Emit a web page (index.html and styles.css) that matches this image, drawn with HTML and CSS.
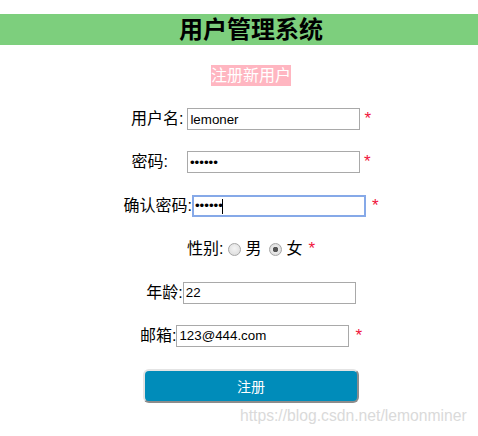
FILE: index.html
```html
<!DOCTYPE html>
<html lang="zh-CN">
<head>
    <meta charset="UTF-8">
    <meta name="viewport" content="width=device-width, initial-scale=1.0">
    <title>用户管理系统</title>
    <link rel="stylesheet" href="styles.css">
</head>
<body>
    <div class="page">
        <h1 class="title">用户管理系统</h1>
        <div class="subtitle"><span class="tag">注册新用户</span></div>
        <form class="reg-form" id="reg-form">
            <div class="row">
                <label class="label" for="username">用户名:</label>
                <input class="field" type="text" id="username" value="lemoner">
                <span class="req">*</span>
            </div>
            <div class="row">
                <label class="label label-wide" for="password">密码:</label>
                <input class="field" type="password" id="password" value="123456">
                <span class="req">*</span>
            </div>
            <div class="row">
                <label class="label label-tight" for="confirm">确认密码:</label>
                <input class="field field-focus" type="password" id="confirm" value="123456">
                <span class="req req-far">*</span>
            </div>
            <div class="row">
                <span class="label label-sex">性别:</span>
                <input class="radio" type="radio" name="sex" id="male">
                <label class="radio-text" for="male">男</label>
                <input class="radio radio-second" type="radio" name="sex" id="female" checked>
                <label class="radio-text" for="female">女</label>
                <span class="req req-far">*</span>
            </div>
            <div class="row">
                <label class="label label-tight" for="age">年龄:</label>
                <input class="field" type="text" id="age" value="22">
            </div>
            <div class="row">
                <label class="label label-tight" for="email">邮箱:</label>
                <input class="field" type="text" id="email" value="123@444.com">
                <span class="req req-far">*</span>
            </div>
            <div class="row row-btn">
                <button class="submit-btn" type="submit">注册</button>
            </div>
        </form>
        <div class="watermark">https://blog.csdn.net/lemonminer</div>
    </div>
</body>
</html>
```

FILE: styles.css
```css
html, body {
    margin: 0;
    overflow: hidden;
}
body {
    font-family: "Liberation Sans", "Noto Sans CJK SC", sans-serif;
    background-color: white;
    color: #000;
}
.page {
    position: relative;
    box-sizing: border-box;
    width: 100%;
    height: 436px;
    padding-top: 14px;
}
.title {
    margin: 0;
    height: 31px;
    padding-left: 24px;
    line-height: 31px;
    background-color: #7dcf7d;
    text-align: center;
    font-size: 24px;
    font-weight: bold;
}
.subtitle {
    margin-top: 20px;
    padding-left: 24px;
    text-align: center;
    height: 21px;
}
.tag {
    display: inline-block;
    height: 21px;
    line-height: 21px;
    background-color: #ffb6c1;
    color: white;
    font-size: 16px;
}
.reg-form {
    margin-top: 22px;
    padding-left: 24px;
    display: flex;
    flex-direction: column;
    gap: 21.4px;
}
.row {
    display: flex;
    justify-content: center;
    align-items: center;
    height: 22px;
    font-size: 16px;
}
.label {
    line-height: 22px;
    margin-right: 4px;
}
.label-wide {
    margin-right: 19px;
}
.label-tight {
    margin-right: 0;
}
.label-sex {
    margin-right: 3px;
}
.field {
    box-sizing: border-box;
    width: 173px;
    height: 22px;
    margin: 0;
    padding: 1px 2px;
    border: 1px solid #a9a9a9;
    font-family: "Liberation Sans", Arial, sans-serif;
    font-size: 13.33px;
    color: #000;
    background: white;
}
.field:focus,
.field-focus {
    outline: none;
    border: 2px solid #86a9e8;
    padding: 0 1px;
    width: 174px;
}
.field-focus {
    /* text caret after the dots */
    background: linear-gradient(#000, #000) no-repeat 28px 2px / 1px 15px, white;
}
.req {
    margin-left: 4px;
    color: #f0143c;
    font-size: 17px;
    line-height: 22px;
}
.req-far {
    margin-left: 6px;
}
.radio {
    appearance: none;
    -webkit-appearance: none;
    box-sizing: border-box;
    width: 13px;
    height: 13px;
    margin: 1px 4px 0 2px;
    border: 1px solid #a6a6a6;
    border-radius: 50%;
    background: radial-gradient(circle at 50% 40%, #f4f4f4 0%, #d9d9d9 100%);
}
.radio-second {
    margin-left: 8px;
}
.radio:checked {
    background: radial-gradient(circle, #555 0, #555 2.5px, #eaeaea 3px, #d4d4d4 100%);
}
.radio-text {
    line-height: 22px;
}
.row-btn {
    height: 34px;
    margin-top: 0.6px;
}
.submit-btn {
    box-sizing: border-box;
    width: 216px;
    height: 34px;
    background-color: #008cba;
    border: 2px solid;
    border-color: #e4e4e4 #8c8c8c #8c8c8c #e4e4e4;
    border-radius: 6px;
    color: white;
    font-family: "Liberation Sans", "Noto Sans CJK SC", sans-serif;
    font-size: 14px;
    cursor: pointer;
}
.watermark {
    position: absolute;
    left: 240px;
    top: 407px;
    font-family: "Liberation Sans", Arial, sans-serif;
    font-size: 15.7px;
    color: #dadada;
    white-space: nowrap;
}
```
